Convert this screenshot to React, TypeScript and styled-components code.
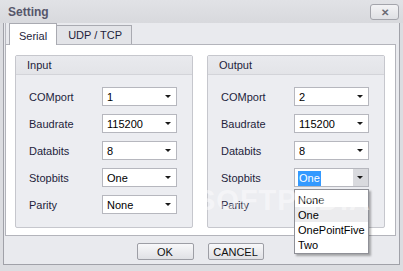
import React from "react";
import styled, { createGlobalStyle, css } from "styled-components";

const GlobalStyle = createGlobalStyle`
  html, body { margin: 0; padding: 0; }
  body {
    width: 403px;
    height: 271px;
    overflow: hidden;
    background: #d9dade;
    font-family: "Liberation Sans", Arial, sans-serif;
  }
`;

const Frame = styled.div`
  position: relative;
  width: 403px;
  height: 271px;
  display: flex;
  flex-direction: column;
  background: #dcdde1;
`;

const TitleBar = styled.div`
  height: 23px;
  flex: none;
  display: flex;
  align-items: center;
  justify-content: space-between;
  padding: 0 4px 0 8px;
  background: linear-gradient(#e1e2e6, #d8d9dd);
`;

const Title = styled.span`
  font-weight: bold;
  font-size: 12px;
  color: #56566a;
`;

const CloseButton = styled.div`
  width: 27px;
  height: 14px;
  margin-top: 1px;
  border: 1px solid #a3a4ab;
  border-radius: 3px;
  background: linear-gradient(#f3f3f5, #dfe0e4);
  display: flex;
  align-items: center;
  justify-content: center;
  font-size: 10px;
  font-weight: bold;
  color: #6a6a74;
`;

const Body = styled.div`
  flex: 1;
  margin: 0 3px 6px 3px;
  border: 1px solid #a0a1a8;
  border-top: none;
  background: #e9eaee;
  display: flex;
  flex-direction: column;
`;

const TabControl = styled.div`
  margin: 0 3px 0 1px;
  display: flex;
  flex-direction: column;
`;

const TabStrip = styled.div`
  height: 21px;
  display: flex;
  align-items: flex-end;
  padding-left: 3px;
  border-left: 1px solid #b8b9c0;
`;

const Tab = styled.div<{ $active?: boolean }>`
  font-size: 11px;
  color: #1e1e3c;
  display: flex;
  align-items: center;
  border: 1px solid #a9aab1;
  border-bottom: none;
  ${(p) =>
    p.$active
      ? css`
          height: 22px;
          padding: 2px 9px 0 9px;
          box-sizing: border-box;
          background: #ffffff;
          position: relative;
          z-index: 1;
          margin-bottom: -1px;
        `
      : css`
          height: 19px;
          padding: 0 9px 0 11px;
          box-sizing: border-box;
          background: #e3e4e8;
          border-left: none;
          margin-bottom: 0;
        `}
`;

const Panel = styled.div`
  height: 192px;
  box-sizing: border-box;
  background: #ffffff;
  border: 1px solid #b3b4bb;
  padding: 10px 0 0 9px;
  display: flex;
  gap: 14px;
`;

const GroupBox = styled.div`
  width: 178px;
  box-sizing: border-box;
  border: 1px solid #c6c7cd;
  border-radius: 2px;
  background: #ecedf1;
  align-self: flex-start;
`;

const GroupHeader = styled.div`
  height: 18px;
  border-bottom: 1px solid #d3d4d9;
  background: linear-gradient(#e9eaee, #e3e4e8);
  padding-left: 11px;
  display: flex;
  align-items: center;
  font-size: 11px;
  color: #1e1e3c;
`;

const GroupBody = styled.div`
  padding: 12px 0 13px 13px;
  display: flex;
  flex-direction: column;
  gap: 8px;
`;

const Row = styled.div`
  height: 19px;
  display: flex;
  align-items: center;
`;

const Label = styled.span`
  width: 73px;
  font-size: 11px;
  color: #1e1e3c;
`;

const SelectWrap = styled.div`
  position: relative;
  width: 75px;
  height: 19px;
`;

const SelectBox = styled.div`
  width: 75px;
  height: 19px;
  box-sizing: border-box;
  border: 1px solid #b6b7be;
  background: #ffffff;
  display: flex;
  align-items: center;
`;

const SelectText = styled.span`
  flex: 1;
  padding-left: 4px;
  font-size: 11px;
  color: #000000;
`;

const Highlight = styled.span`
  background: #3399ff;
  color: #ffffff;
  padding: 1px 1px 2px 1px;
  margin-left: -1px;
`;

const ArrowBox = styled.div<{ $pressed?: boolean }>`
  width: 15px;
  height: 17px;
  display: flex;
  align-items: center;
  justify-content: center;
  ${(p) =>
    p.$pressed &&
    css`
      background: #d9dade;
    `}
`;

const Arrow = styled.span`
  width: 0;
  height: 0;
  border-left: 3px solid transparent;
  border-right: 3px solid transparent;
  border-top: 3px solid #1a1a1a;
  margin-right: 1px;
`;

const DropList = styled.div`
  position: absolute;
  top: 21px;
  left: 0;
  width: 75px;
  box-sizing: border-box;
  padding: 2px 0 1px 0;
  background: #ffffff;
  border: 1px solid #8f9097;
  box-shadow: 2px 2px 2px rgba(0, 0, 0, 0.3);
  z-index: 5;
`;

const DropItem = styled.div<{ $hover?: boolean }>`
  height: 15px;
  display: flex;
  align-items: center;
  padding-left: 3px;
  font-size: 11px;
  color: #000000;
  ${(p) =>
    p.$hover &&
    css`
      background: #ececee;
    `}
`;

const Footer = styled.div`
  flex: 1;
  display: flex;
  justify-content: center;
  align-items: flex-start;
  padding: 7px 3px 0 0;
  gap: 14px;
`;

const Button = styled.div<{ $w: number }>`
  width: ${(p) => p.$w}px;
  height: 17px;
  box-sizing: border-box;
  border: 1px solid #9d9ea5;
  border-radius: 2px;
  background: linear-gradient(#f8f8fa, #e0e1e5);
  display: flex;
  align-items: center;
  justify-content: center;
  font-size: 11px;
  color: #111111;
`;

const Watermark = styled.div`
  position: absolute;
  left: 196px;
  top: 184px;
  font-size: 29px;
  font-weight: bold;
  letter-spacing: 1px;
  color: rgba(255, 255, 255, 0.45);
  pointer-events: none;
  z-index: 10;
`;

type Field = { label: string; value: string };

const inputFields: Field[] = [
  { label: "COMport", value: "1" },
  { label: "Baudrate", value: "115200" },
  { label: "Databits", value: "8" },
  { label: "Stopbits", value: "One" },
  { label: "Parity", value: "None" },
];

const outputFields: Field[] = [
  { label: "COMport", value: "2" },
  { label: "Baudrate", value: "115200" },
  { label: "Databits", value: "8" },
  { label: "Stopbits", value: "One" },
  { label: "Parity", value: "None" },
];

const Select: React.FC<{ value: string; open?: boolean }> = ({ value, open }) => (
  <SelectWrap>
    <SelectBox>
      <SelectText>{open ? <Highlight>{value}</Highlight> : value}</SelectText>
      <ArrowBox $pressed={open}>
        <Arrow />
      </ArrowBox>
    </SelectBox>
    {open && (
      <DropList>
        <DropItem>None</DropItem>
        <DropItem $hover>One</DropItem>
        <DropItem>OnePointFive</DropItem>
        <DropItem>Two</DropItem>
      </DropList>
    )}
  </SelectWrap>
);

const Group: React.FC<{ title: string; fields: Field[]; openLabel?: string }> = ({
  title,
  fields,
  openLabel,
}) => (
  <GroupBox>
    <GroupHeader>{title}</GroupHeader>
    <GroupBody>
      {fields.map((f) => (
        <Row key={f.label}>
          <Label>{f.label}</Label>
          <Select value={f.value} open={f.label === openLabel} />
        </Row>
      ))}
    </GroupBody>
  </GroupBox>
);

export default function App() {
  return (
    <>
      <GlobalStyle />
      <Frame>
        <TitleBar>
          <Title>Setting</Title>
          <CloseButton>✕</CloseButton>
        </TitleBar>
        <Body>
          <TabControl>
            <TabStrip>
              <Tab $active>Serial</Tab>
              <Tab>UDP / TCP</Tab>
            </TabStrip>
            <Panel>
              <Group title="Input" fields={inputFields} />
              <Group title="Output" fields={outputFields} openLabel="Stopbits" />
            </Panel>
          </TabControl>
          <Footer>
            <Button $w={57}>OK</Button>
            <Button $w={56}>CANCEL</Button>
          </Footer>
        </Body>
        <Watermark>SOFTPEDIA</Watermark>
      </Frame>
    </>
  );
}
